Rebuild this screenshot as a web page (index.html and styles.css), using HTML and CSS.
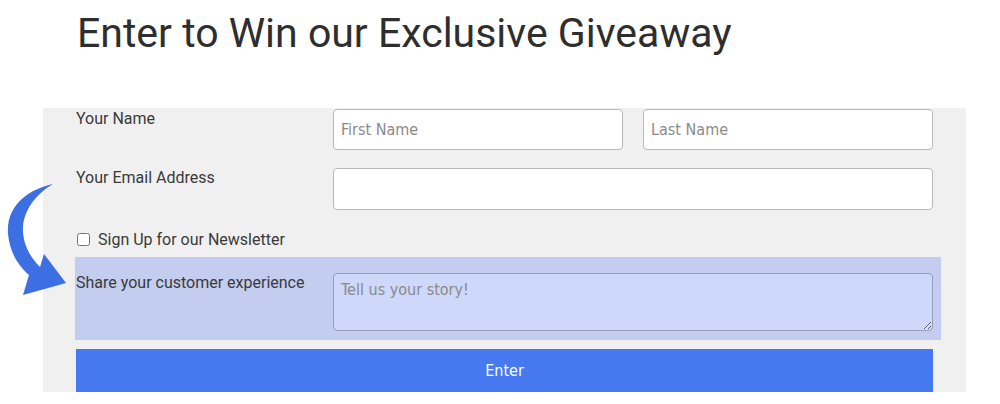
FILE: index.html
```html
<!DOCTYPE html>
<html>
<head>
    <title>Giveaway</title>
    <link rel="stylesheet" href="styles.css">
</head>
<body>
    <h1 class="title">Enter to Win our Exclusive Giveaway</h1>

    <div class="panel">
        <form class="entry-form">
            <div class="row">
                <label class="label">Your Name</label>
                <div class="pair">
                    <input type="text" class="field" placeholder="First Name">
                    <input type="text" class="field" placeholder="Last Name">
                </div>
            </div>

            <div class="row row-email">
                <label class="label">Your Email Address</label>
                <input type="email" class="field field-tall">
            </div>

            <div class="check-row">
                <input type="checkbox" id="newsletter" class="check">
                <label for="newsletter">Sign Up for our Newsletter</label>
            </div>

            <div class="row row-story">
                <label class="label">Share your customer experience</label>
                <textarea class="story" placeholder="Tell us your story!"></textarea>
            </div>

            <button type="button" class="submit">Enter</button>
        </form>
    </div>

    <!-- pointer arrow drawn over the form edge -->
    <svg class="arrow" width="80" height="130" viewBox="0 170 80 130">
        <path d="M53,184 C30,189 6,204 8,234 C10,254 19,266 29,275 L23,295 L66,283 L44,254 L40,267 C29,256 22,242 23,226 C25,207 38,193 53,184 Z" fill="#3c6fe3"/>
    </svg>
</body>
</html>
```

FILE: styles.css
```css
body {
    margin: 0;
    font-family: Roboto, "Liberation Sans", Arial, sans-serif;
    color: #333;
    background-color: #fff;
    position: relative;
}
.title {
    margin: 9px 0 51px 77px;
    font-size: 41px;
    line-height: 48px;
    font-weight: 400;
    color: #2e2e2e;
}
.panel {
    margin-left: 43px;
    width: 923px;
    box-sizing: border-box;
    padding: 1px 33px 0;
    background-color: #f0f0f0;
}
.row {
    display: grid;
    grid-template-columns: 257px 1fr;
}
.label {
    font-size: 16px;
    line-height: 20px;
    color: #3a3a3a;
}
.pair {
    display: grid;
    grid-template-columns: 1fr 1fr;
    gap: 20px;
}
.field {
    height: 41px;
    box-sizing: border-box;
    border: 1px solid #b9b9b9;
    border-radius: 4px;
    background-color: #fff;
    padding: 0 7px;
    font-family: "DejaVu Sans Condensed", "DejaVu Sans", sans-serif;
    font-size: 16px;
    color: #333;
}
.field::placeholder, .story::placeholder {
    color: #8a8a8a;
}
.row-email {
    margin-top: 18px;
}
.field-tall {
    height: 42px;
}
.check-row {
    display: flex;
    align-items: center;
    gap: 8px;
    margin-top: 20px;
    height: 18px;
    font-size: 16px;
    color: #3a3a3a;
}
.check {
    margin: 0 0 0 1px;
    width: 13px;
    height: 13px;
}
.row-story {
    margin: 9px -8px 0 -1px;
    padding: 16px 8px 9px 1px;
    background-color: #c3cdf0;
}
.row-story .label {
    margin-top: 0;
}
.story {
    height: 58px;
    box-sizing: border-box;
    border: 1px solid #979db6;
    border-radius: 4px;
    background-color: #cdd8fa;
    padding: 6px 7px;
    resize: vertical;
    font-family: "DejaVu Sans Condensed", "DejaVu Sans", sans-serif;
    font-size: 16px;
    color: #333;
}
.submit {
    display: block;
    width: 100%;
    height: 43px;
    margin-top: 9px;
    border: none;
    background-color: #4679ef;
    color: #fff;
    font-family: "DejaVu Sans Condensed", "DejaVu Sans", sans-serif;
    font-size: 16px;
    cursor: pointer;
}
.arrow {
    position: absolute;
    left: 0;
    top: 170px;
}
```
